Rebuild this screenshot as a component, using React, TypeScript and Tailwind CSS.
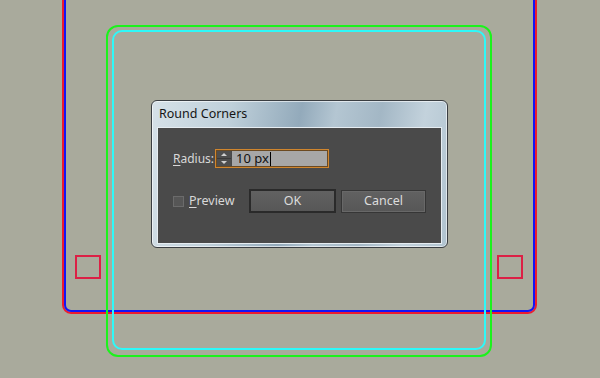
export default function App() {
  return (
    <div className="relative h-[378px] w-[600px] overflow-hidden bg-[#a9aa9c] font-['Noto_Sans',sans-serif]">
      {/* artboard guides on the canvas */}
      <div className="absolute left-[62px] top-[-20px] h-[334px] w-[475px] rounded-[9px] border-2 border-[#ee1c2e]" />
      <div className="absolute left-[64px] top-[-20px] h-[332px] w-[471px] rounded-[7px] border-2 border-[#1414f5]" />
      <div className="absolute left-[75px] top-[255px] h-[24px] w-[26px] border-[2.5px] border-[#dc2045]" />
      <div className="absolute left-[497px] top-[255px] h-[24px] w-[26px] border-[2.5px] border-[#dc2045]" />
      <div className="absolute left-[106px] top-[25px] h-[332px] w-[386px] rounded-[12px] border-2 border-[#1cf21c]" />
      <div className="absolute left-[112px] top-[30px] h-[320px] w-[374px] rounded-[10px] border-2 border-[#2ef8f8]" />

      {/* dialog */}
      <div className="absolute left-[151px] top-[100px] flex h-[148px] w-[297px] flex-col rounded-[6px] border border-[#3a3e42] bg-[linear-gradient(100deg,#d6e1e8_0%,#bfd0da_25%,#93aabb_47%,#b4c6d2_58%,#a3b7c5_72%,#c3d2dc_86%,#b0c3cf_100%)] shadow-[inset_0_0_0_1px_rgba(255,255,255,0.6)]">
        <div className="flex h-[26px] items-center px-[7px] pt-[1px] text-[12.5px] text-[#151515]">
          Round Corners
        </div>
        <div className="mx-[5px] mb-[3px] flex-1 border border-[#e6edf2] bg-[#4a4a4a] text-[12.5px] text-[#d8d8d8]">
          <div className="ml-[15px] mt-[21px] flex h-[19px] items-center">
            <span className="mr-[1px] shrink-0 whitespace-nowrap text-[12px]">
              <span className="underline underline-offset-2">R</span>adius:
            </span>
            <div className="flex h-[19px] w-[114px] shrink-0 border border-[#d0862e] shadow-[inset_0_0_0_1px_#6b4a22]">
              <div className="m-px flex w-[14px] flex-col bg-[#4e4e4e]">
                <div className="flex flex-1 items-center justify-center border-b border-[#3a3a3a]">
                  <div className="h-0 w-0 border-x-[3px] border-b-[3px] border-x-transparent border-b-[#d0d0d0]" />
                </div>
                <div className="flex flex-1 items-center justify-center">
                  <div className="h-0 w-0 border-x-[3px] border-t-[3px] border-x-transparent border-t-[#d0d0d0]" />
                </div>
              </div>
              <div className="my-px mr-px flex flex-1 items-center bg-[#a7a7a7] pl-[4px] text-[13px] text-[#111]">
                10 px<span className="ml-[1px] h-[14px] w-px bg-black" />
              </div>
            </div>
          </div>
          <div className="ml-[15px] mt-[21px] flex h-[24px] items-center">
            <div className="h-[11px] w-[11px] shrink-0 border border-[#6b6b6b] bg-[#565656]" />
            <span className="ml-[5px] w-[60px] shrink-0">
              <span className="underline underline-offset-2">P</span>review
            </span>
            <button className="flex h-[24px] w-[87px] shrink-0 items-center justify-center border-2 border-[#2a2a2a] bg-[linear-gradient(#616161,#575757)] text-[#dcdcdc]">
              OK
            </button>
            <button className="ml-[5px] flex h-[23px] w-[85px] shrink-0 items-center justify-center border border-[#363636] bg-[linear-gradient(#616161,#575757)] text-[#dcdcdc] shadow-[inset_0_0_0_1px_#686868]">
              Cancel
            </button>
          </div>
        </div>
      </div>
    </div>
  );
}
